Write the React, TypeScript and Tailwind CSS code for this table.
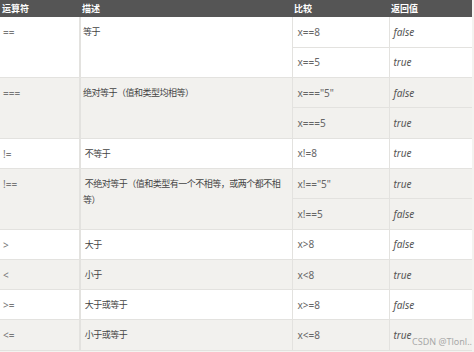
interface Row {
  op: string;
  desc: string;
  cases: { expr: string; result: string }[];
  shaded: boolean;
}

const rows: Row[] = [
  { op: '==', desc: '等于', cases: [{ expr: 'x==8', result: 'false' }, { expr: 'x==5', result: 'true' }], shaded: false },
  { op: '===', desc: '绝对等于（值和类型均相等）', cases: [{ expr: 'x==="5"', result: 'false' }, { expr: 'x===5', result: 'true' }], shaded: true },
  { op: '!=', desc: '\u00a0不等于', cases: [{ expr: 'x!=8', result: 'true' }], shaded: false },
  { op: '!==', desc: '\u00a0不绝对等于（值和类型有一个不相等，或两个都不相等）', cases: [{ expr: 'x!=="5"', result: 'true' }, { expr: 'x!==5', result: 'false' }], shaded: true },
  { op: '>', desc: '\u00a0大于', cases: [{ expr: 'x>8', result: 'false' }], shaded: false },
  { op: '<', desc: '\u00a0小于', cases: [{ expr: 'x<8', result: 'true' }], shaded: true },
  { op: '>=', desc: '\u00a0大于或等于', cases: [{ expr: 'x>=8', result: 'false' }], shaded: false },
  { op: '<=', desc: '\u00a0小于或等于', cases: [{ expr: 'x<=8', result: 'true' }], shaded: true },
];

const font = { fontFamily: '"Noto Sans", "Noto Sans CJK SC", sans-serif' };

export default function App() {
  return (
    <div className="relative w-[474px] h-[352px] bg-[#f4f3f0] overflow-hidden" style={font}>
      <table className="w-[472px] border-collapse table-fixed text-[10px] leading-[16px]">
        <colgroup>
          <col className="w-[80px]" />
          <col className="w-[212px]" />
          <col className="w-[97px]" />
          <col className="w-[83px]" />
        </colgroup>
        <thead>
          <tr className="h-[17px] bg-[#555555] text-white text-[9px] leading-[17px]">
            <th className="text-left pl-[2px] font-bold">运算符</th>
            <th className="text-left pl-[2px] font-bold">描述</th>
            <th className="text-left pl-[2px] font-bold">比较</th>
            <th className="text-left pl-[2px] font-bold">返回值</th>
          </tr>
        </thead>
        <tbody>
          {rows.map((row) =>
            row.cases.map((c, i) => (
              <tr key={row.op + i} className={row.shaded ? 'h-[30.3px] bg-[#f2f1ee]' : 'h-[30.3px] bg-white'}>
                {i === 0 && (
                  <>
                    <td rowSpan={row.cases.length} className="align-top pt-[7px] pl-[3px] text-[#777] border-b border-r-2 border-[#e3e2df]">
                      {row.op}
                    </td>
                    <td rowSpan={row.cases.length} className="align-top pt-[7px] pl-[2px] pr-[4px] text-[9px] tracking-[-0.5px] text-[#444] border-b border-r border-[#e3e2df]">
                      {row.desc}
                    </td>
                  </>
                )}
                <td className="pl-[5px] text-[#666] border-b border-r border-[#e3e2df]">{c.expr}</td>
                <td className="pl-[4px] text-[#555] italic border-b border-[#e3e2df]">{c.result}</td>
              </tr>
            ))
          )}
        </tbody>
      </table>
      <div className="absolute right-[2px] bottom-[4px] text-[9px] text-[#a8a8a8]">CSDN @Tlonl..</div>
    </div>
  );
}
